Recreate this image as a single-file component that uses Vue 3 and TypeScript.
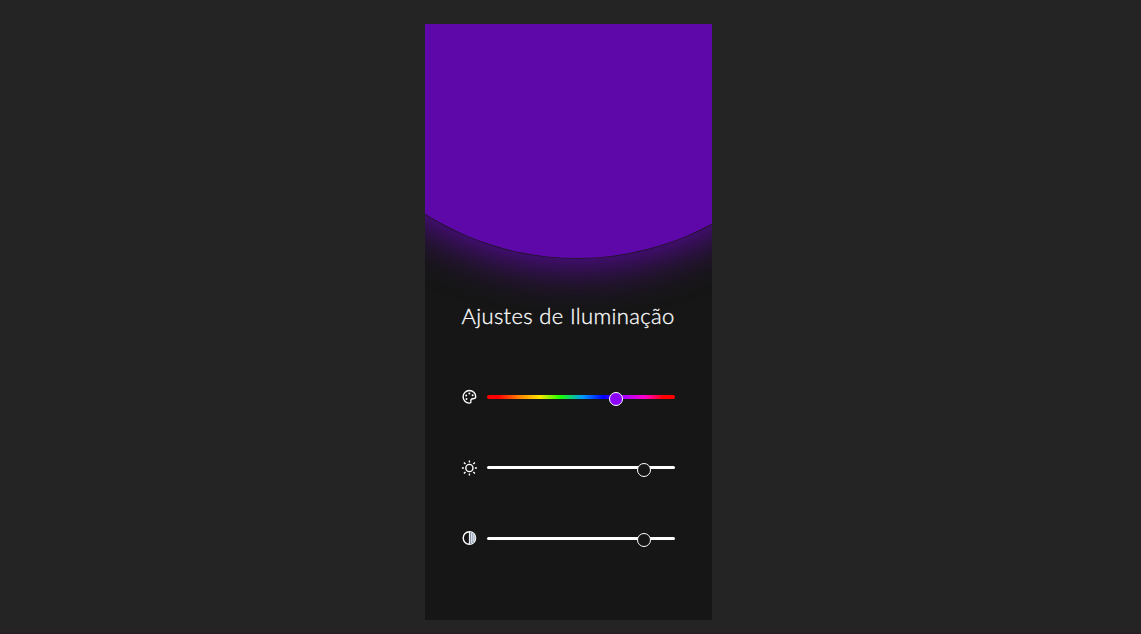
<script setup lang="ts">
import { ref } from 'vue'

const hue = ref(68.7)
const brightness = ref(83.5)
const contrast = ref(83.5)
</script>

<template>
  <main class="page">
    <section class="card">
      <div class="stage">
        <div class="lamp"></div>
      </div>
      <h1>Ajustes de Iluminação</h1>
      <div class="controls">
        <div class="row">
          <svg class="icon" viewBox="-.4 .2 16 16">
            <path d="M8 1.7C4.4 1.7 1.7 4.6 1.7 8S4.5 14.3 7.8 14.3c1.5 0 1.9-.8 1.7-1.9-.2-1.5.3-2.4 1.8-2.5 1.5 0 3-.1 3-2 0-3.6-2.8-6.2-6.3-6.2z" fill="none" stroke="#fff" stroke-width="1.4" />
            <g fill="#fff"><circle cx="8" cy="4.8" r="1" /><circle cx="11.2" cy="6.5" r="1" /><circle cx="4.8" cy="6.6" r="1" /><circle cx="5.1" cy="10.1" r="1" /></g>
          </svg>
          <div class="track rainbow"><span class="thumb violet" :style="{ left: hue + '%' }"></span></div>
        </div>
        <div class="row">
          <svg class="icon" viewBox="-.4 0 16 16" fill="none" stroke="#fff" stroke-width="1.4">
            <circle cx="8" cy="8" r="3.6" />
            <path d="M8 .4v2.1M8 13.5v2.1M.5 8h2M13.5 8h2M2.5 2.5l1.6 1.6M11.9 11.9l1.6 1.6M2.5 13.5l1.6-1.6M11.9 4.1l1.6-1.6" />
          </svg>
          <div class="track"><span class="thumb" :style="{ left: brightness + '%' }"></span></div>
        </div>
        <div class="row">
          <svg class="icon" viewBox="-.4 0 16 16">
            <circle cx="8" cy="8" r="6.2" fill="none" stroke="#fff" stroke-width="1.4" />
            <path d="M8 2a6 6 0 0 1 0 12z" fill="#8793ad" />
            <path d="M8 2v12M10.4 3v10M12.5 4.3v7.4" stroke="#fff" stroke-width="1" />
          </svg>
          <div class="track"><span class="thumb low" :style="{ left: contrast + '%' }"></span></div>
        </div>
      </div>
    </section>
  </main>
</template>

<style>
body { background: #242424; }
</style>

<style scoped>
.page {
  box-sizing: border-box;
  height: 634px;
  padding-top: 24px;
  padding-left: 425px;
  overflow: hidden;
  background: #242424;
  border-bottom: 3px solid #271f25;
}
.card {
  width: 287px;
  height: 596px;
  overflow: hidden;
  background: #161616;
}
.stage {
  position: relative;
  height: 278px;
}
.lamp {
  position: absolute;
  left: -131.5px;
  top: -332px;
  width: 566px;
  height: 565.5px;
  border-radius: 50%;
  background: #5f08a9;
  box-shadow: 0 0 0 0.7px rgba(22, 22, 22, 0.9), 0 2px 46px 4px #5f08a9;
}
h1 {
  margin: 0 0 0 36.5px;
  font: 300 22px/28px Lato, sans-serif;
  letter-spacing: 0.35px;
  -webkit-text-stroke: 0.3px #fff;
  white-space: nowrap;
  color: #fff;
}
.controls {
  display: flex;
  flex-direction: column;
  gap: 54.5px;
  padding: 59px 37px 0 36px;
}
.row {
  display: flex;
  align-items: center;
  gap: 10px;
  height: 16px;
}
.icon {
  flex: none;
  width: 16px;
  height: 16px;
  overflow: visible;
}
.track {
  position: relative;
  flex: 1;
  height: 3px;
  border-radius: 2px;
  background: #fff;
}
.rainbow {
  height: 4px;
  background: linear-gradient(90deg, #f00 6%, #ff8000 17%, #ffe600 28%, #1aff00 39%, #0099ff 51%, #0000ff 62%, #a0f 73%, #f0c 84%, #f00 94%);
}
.thumb {
  position: absolute;
  top: -3px;
  box-sizing: border-box;
  width: 14px;
  height: 14px;
  margin-left: -7px;
  border: 1px solid #fff;
  border-radius: 50%;
  background: #161616;
}
.low {
  top: -4px;
}
.violet {
  background: #8c00ff;
}
</style>
